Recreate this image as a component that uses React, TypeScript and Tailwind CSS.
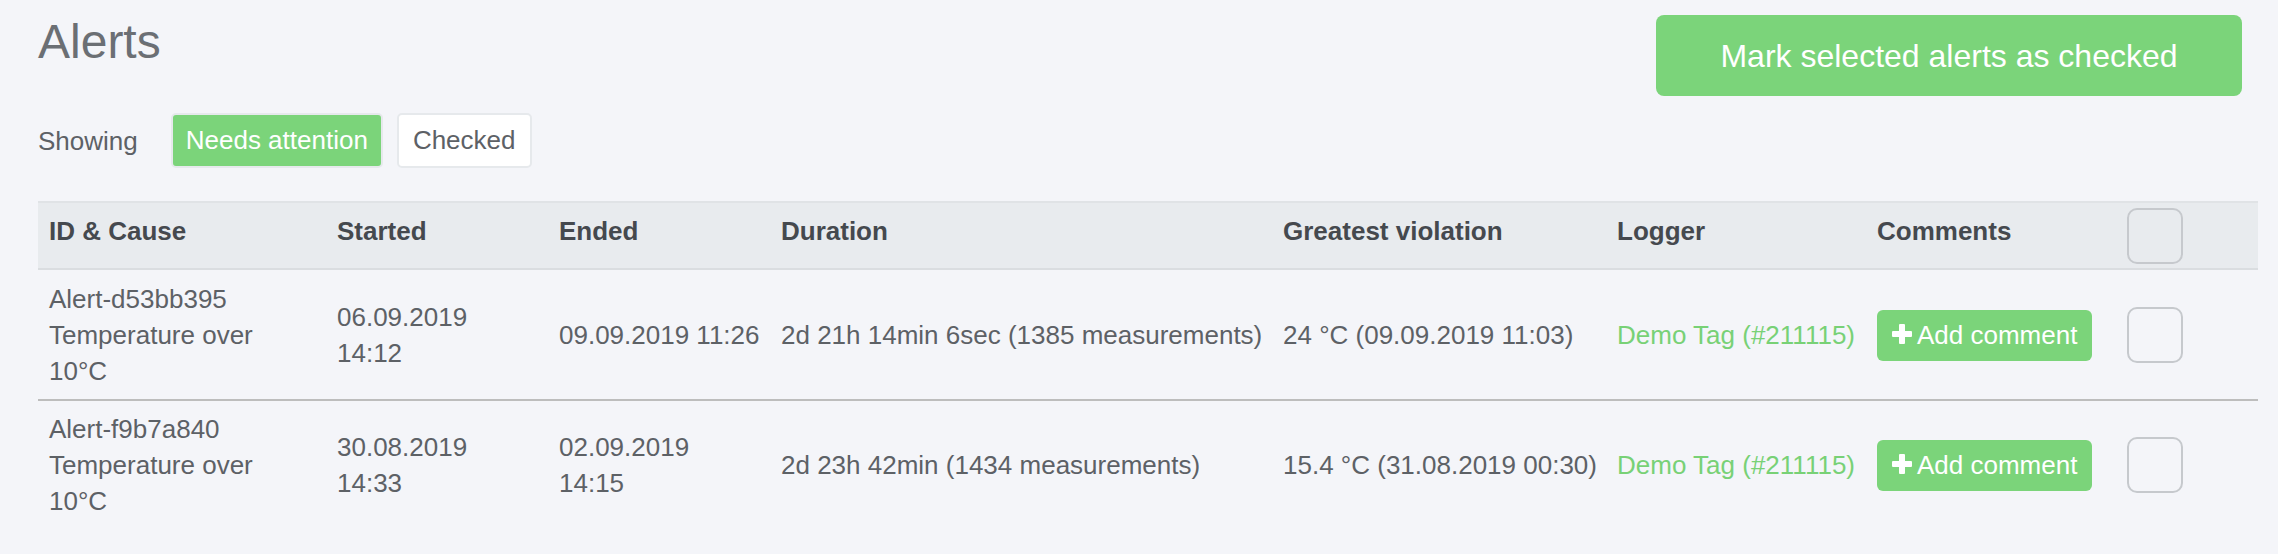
import React from 'react';

const cols = 'grid grid-cols-[288px_222px_222px_502px_334px_260px_250px_142px]';

type Alert = {
    id: string;
    started: React.ReactNode;
    ended: React.ReactNode;
    duration: string;
    violation: string;
};

const alerts: Alert[] = [
    {
        id: 'Alert-d53bb395',
        started: <>06.09.2019<br />14:12</>,
        ended: '09.09.2019 11:26',
        duration: '2d 21h 14min 6sec (1385 measurements)',
        violation: '24 °C (09.09.2019 11:03)',
    },
    {
        id: 'Alert-f9b7a840',
        started: <>30.08.2019<br />14:33</>,
        ended: <>02.09.2019<br />14:15</>,
        duration: '2d 23h 42min (1434 measurements)',
        violation: '15.4 °C (31.08.2019 00:30)',
    },
];

function Checkbox() {
    return <div className="h-[56px] w-[56px] rounded-[10px] border-2 border-[#c6c9cd]" />;
}

function PlusIcon() {
    return (
        <svg width="20" height="20" viewBox="0 0 20 20" className="mr-[5px] mt-[-2px]">
            <rect x="7" y="0" width="6" height="20" rx="1" fill="white" />
            <rect x="0" y="7" width="20" height="6" rx="1" fill="white" />
        </svg>
    );
}

function AlertRow({ alert, first }: { alert: Alert; first: boolean }) {
    return (
        <div className={`${cols} items-center ${first ? 'pt-[1px]' : 'border-t-2 border-[#bdbdbd]'}`}>
            <div className="px-[11px] py-[10px]">
                {alert.id}
                <br />
                Temperature over
                <br />
                10°C
            </div>
            <div className="whitespace-nowrap px-[11px] py-[10px]">{alert.started}</div>
            <div className="whitespace-nowrap px-[11px] py-[10px]">{alert.ended}</div>
            <div className="whitespace-nowrap px-[11px] py-[10px]">{alert.duration}</div>
            <div className="whitespace-nowrap px-[11px] py-[10px]">{alert.violation}</div>
            <div className="whitespace-nowrap px-[11px] py-[10px] text-[#78d176]">Demo Tag (#211115)</div>
            <div className="px-[11px] py-[10px]">
                <button className="flex h-[51px] items-center whitespace-nowrap rounded-[6px] bg-[#7bd47a] px-[15px] text-white">
                    <PlusIcon />
                    Add comment
                </button>
            </div>
            <div className="px-[11px] py-[10px]">
                <Checkbox />
            </div>
        </div>
    );
}

export default function App() {
    return (
        <div className="min-h-screen bg-[#f4f5f9] pl-[38px] pr-[20px] pt-[15px] font-['Liberation_Sans',Arial,sans-serif] text-[26px] leading-[36px] text-[#5d6166]">
            <div className="flex items-start justify-between">
                <h1 className="mt-[3px] text-[48px] font-light leading-none text-[#6b6f74]">Alerts</h1>
                <button className="mr-[16px] h-[81px] w-[586px] rounded-[8px] bg-[#7bd47a] text-[32px] text-white">
                    Mark selected alerts as checked
                </button>
            </div>

            <div className="mt-[17px] flex items-center">
                <span className="mr-[33px]">Showing</span>
                <button className="mr-[14px] rounded-[5px] border-2 border-[#e6e9ec] bg-[#7bd47a] px-[13px] py-[7px] leading-[37px] text-white">
                    Needs attention
                </button>
                <button className="rounded-[5px] border-2 border-[#e6e9ec] bg-white px-[14px] py-[7px] leading-[37px] text-[#5d6166]">
                    Checked
                </button>
            </div>

            <div className="mt-[33px] w-[2220px]">
                <div className={`${cols} h-[69px] border-y-2 border-t-[#e0e3e6] border-b-[#dadde0] bg-[#e8ebee] font-bold text-[#45494e]`}>
                    <div className="px-[11px] pt-[10px]">ID &amp; Cause</div>
                    <div className="px-[11px] pt-[10px]">Started</div>
                    <div className="px-[11px] pt-[10px]">Ended</div>
                    <div className="px-[11px] pt-[10px]">Duration</div>
                    <div className="px-[11px] pt-[10px]">Greatest violation</div>
                    <div className="px-[11px] pt-[10px]">Logger</div>
                    <div className="px-[11px] pt-[10px]">Comments</div>
                    <div className="px-[11px] pt-[5px]">
                        <Checkbox />
                    </div>
                </div>
                {alerts.map((a, i) => (
                    <AlertRow key={a.id} alert={a} first={i === 0} />
                ))}
            </div>
        </div>
    );
}
